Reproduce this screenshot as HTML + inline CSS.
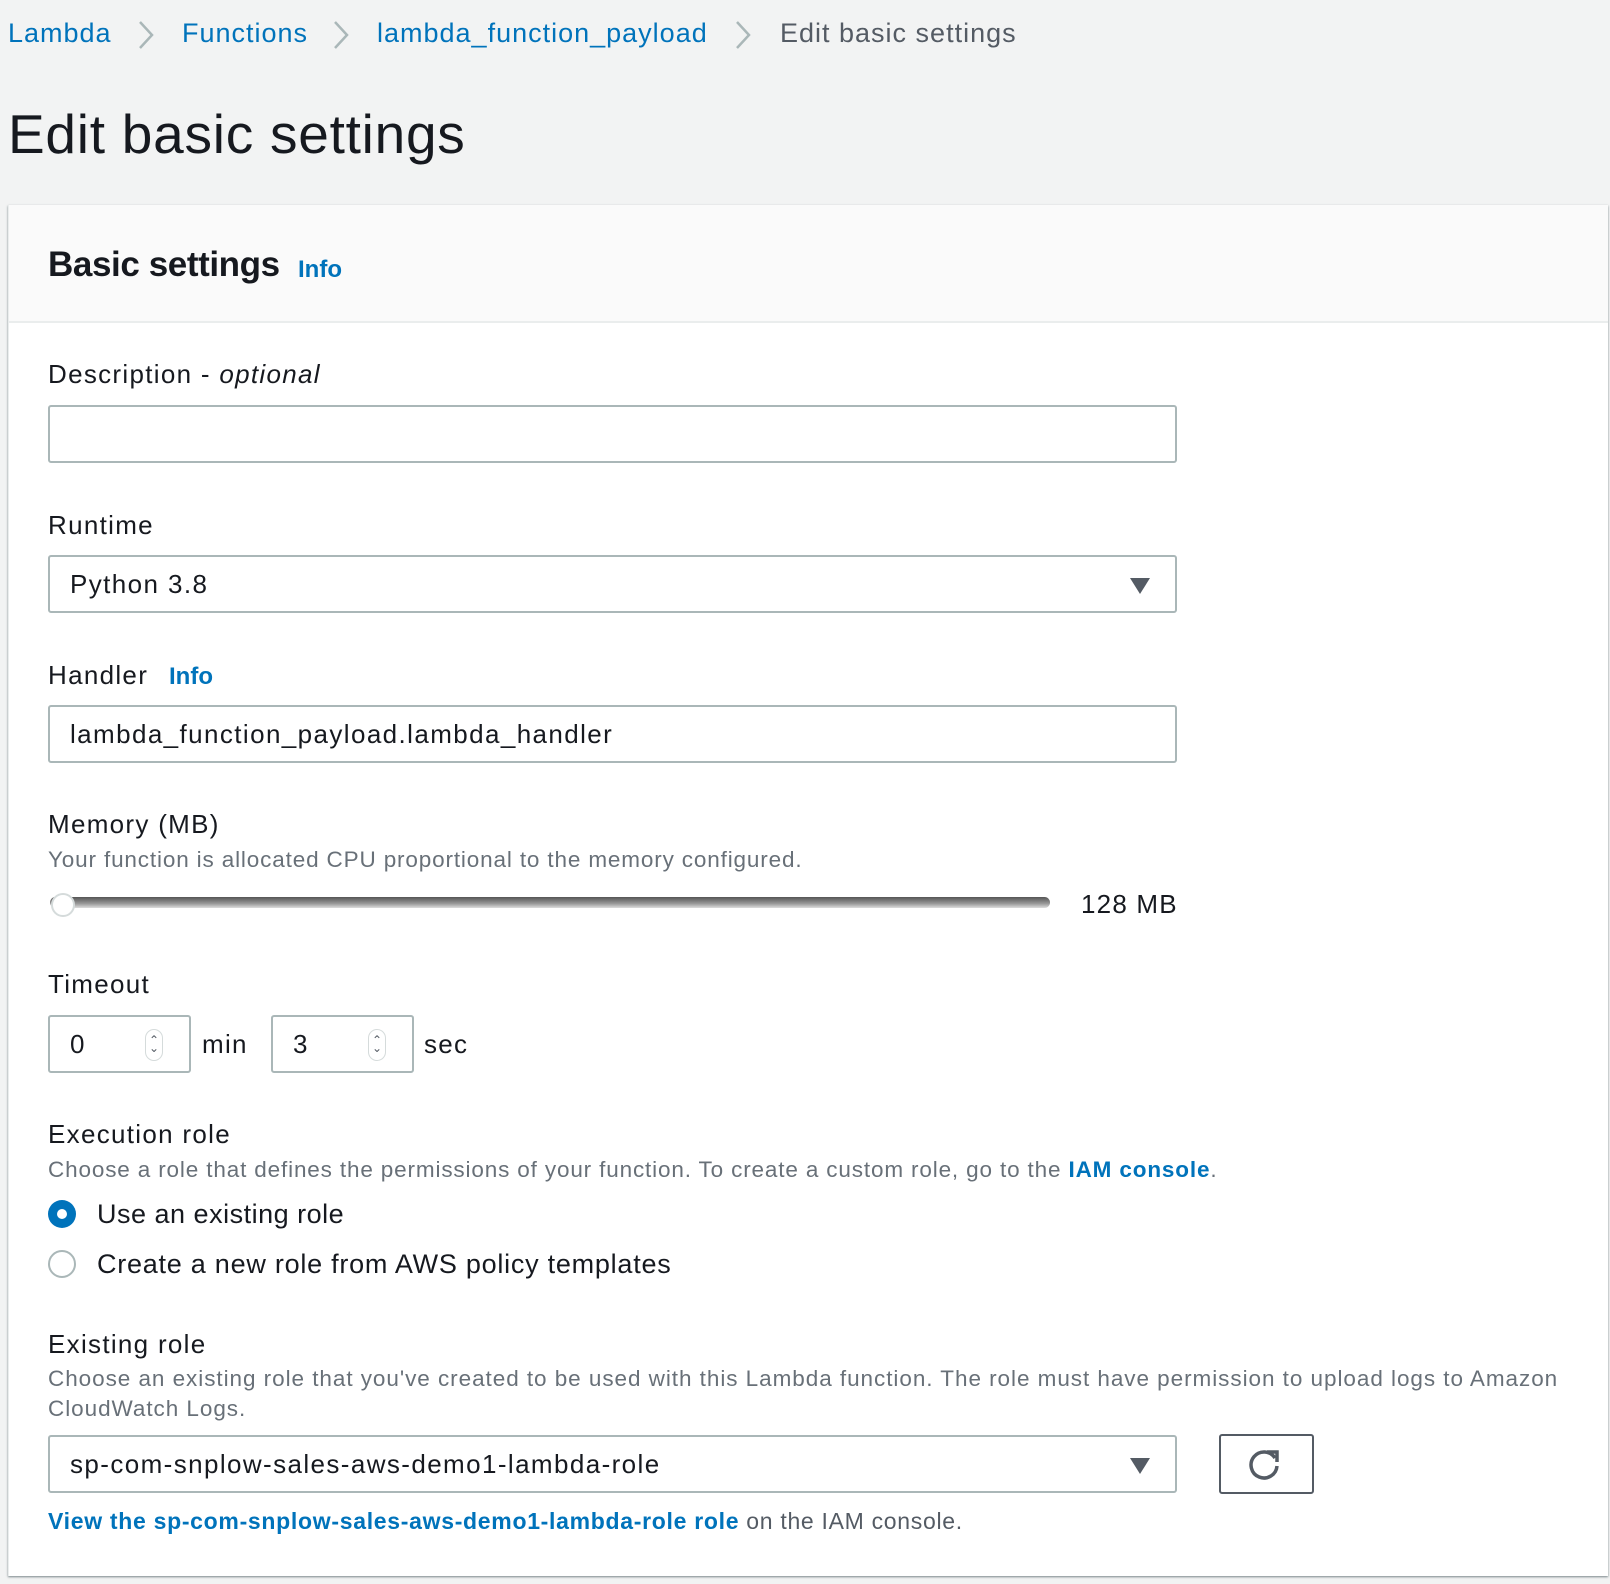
<!DOCTYPE html>
<html><head><meta charset="utf-8"><style>
*{box-sizing:border-box;margin:0;padding:0}
body{width:1610px;height:1584px;background:#f2f3f3;font-family:"Liberation Sans",sans-serif;color:#16191f;position:relative;overflow:hidden}
.a{position:absolute;white-space:nowrap}
.bc{font-size:27px;top:18px;color:#0073bb;letter-spacing:1px}
.sep{position:absolute;top:20px}
.lbl{font-size:26px;left:48px;letter-spacing:1.3px}
.desc{font-size:22.5px;color:#687078;left:48px;letter-spacing:0.85px}
.inp{position:absolute;left:48px;width:1129px;height:58px;border:2px solid #aab7b8;border-radius:3px;background:#fff;font-size:26px;padding-left:20px;line-height:54px;letter-spacing:1.4px}
.tri{position:absolute;right:25px;top:21px;width:0;height:0;border-left:10px solid transparent;border-right:10px solid transparent;border-top:16px solid #545b64}
.link{color:#0073bb;font-weight:bold}
.spin{position:absolute;left:95px;top:12px;width:18px;height:32px;border:1px solid #d5dbdb;border-radius:9px}
</style></head><body>
<div class="a bc" style="left:8px">Lambda</div>
<svg class="sep" style="left:138px" width="16" height="30" viewBox="0 0 16 30"><path d="M2 2 L14 15 L2 28" fill="none" stroke="#aab7b8" stroke-width="2.5"/></svg>
<div class="a bc" style="left:182px">Functions</div>
<svg class="sep" style="left:333px" width="16" height="30" viewBox="0 0 16 30"><path d="M2 2 L14 15 L2 28" fill="none" stroke="#aab7b8" stroke-width="2.5"/></svg>
<div class="a bc" style="left:377px">lambda_function_payload</div>
<svg class="sep" style="left:735px" width="16" height="30" viewBox="0 0 16 30"><path d="M2 2 L14 15 L2 28" fill="none" stroke="#aab7b8" stroke-width="2.5"/></svg>
<div class="a bc" style="left:780px;color:#545b64">Edit basic settings</div>
<div class="a" style="left:8px;top:102px;font-size:55px;letter-spacing:0.75px">Edit basic settings</div>

<div style="position:absolute;left:8px;top:205px;width:1600px;height:1371px;background:#fff;box-shadow:0 1px 2px rgba(0,28,36,.5);border-left:1px solid #eaeded">
<div style="height:118px;background:#fafafa;border-bottom:2px solid #eaeded"></div>
</div>
<div class="a" style="left:48px;top:245px;font-size:35px;font-weight:bold;letter-spacing:-0.4px">Basic settings</div>
<div class="a link" style="left:298px;top:256px;font-size:24px">Info</div>

<div class="a lbl" style="top:359px">Description - <i>optional</i></div>
<div class="inp" style="top:405px"></div>

<div class="a lbl" style="top:510px">Runtime</div>
<div class="inp" style="top:555px">Python 3.8<div class="tri"></div></div>

<div class="a lbl" style="top:660px">Handler</div>
<div class="a link" style="left:169px;top:663px;font-size:24px">Info</div>
<div class="inp" style="top:705px">lambda_function_payload.lambda_handler</div>

<div class="a lbl" style="top:809px">Memory (MB)</div>
<div class="a desc" style="top:847px">Your function is allocated CPU proportional to the memory configured.</div>
<div style="position:absolute;left:50px;top:897px;width:1000px;height:11px;border-radius:6px;background:linear-gradient(#555,#999 60%,#ddd)"></div>
<div style="position:absolute;left:51px;top:893px;width:24px;height:24px;border-radius:50%;background:#fff;border:2px solid #d5dbdb"></div>
<div class="a" style="left:1081px;top:889px;font-size:26px;letter-spacing:1.2px">128 MB</div>

<div class="a lbl" style="top:969px">Timeout</div>
<div class="inp" style="top:1015px;width:143px">0<div class="spin"><span class="a" style="left:3px;top:-17px;font-size:12px;color:#545b64">⌃</span><span class="a" style="left:3px;top:-9px;font-size:12px;color:#545b64">⌄</span></div></div>
<div class="a" style="left:202px;top:1029px;font-size:26px;letter-spacing:1.3px">min</div>
<div class="inp" style="top:1015px;left:271px;width:143px">3<div class="spin"><span class="a" style="left:3px;top:-17px;font-size:12px;color:#545b64">⌃</span><span class="a" style="left:3px;top:-9px;font-size:12px;color:#545b64">⌄</span></div></div>
<div class="a" style="left:424px;top:1029px;font-size:26px;letter-spacing:1.3px">sec</div>

<div class="a lbl" style="top:1119px">Execution role</div>
<div class="a desc" style="top:1157px">Choose a role that defines the permissions of your function. To create a custom role, go to the <span class="link">IAM console</span>.</div>
<div style="position:absolute;left:48px;top:1200px;width:28px;height:28px;border-radius:50%;background:#0073bb;display:flex;align-items:center;justify-content:center"><div style="width:10px;height:10px;border-radius:50%;background:#fff"></div></div>
<div class="a" style="left:97px;top:1199px;font-size:27px;letter-spacing:0.5px">Use an existing role</div>
<div style="position:absolute;left:48px;top:1250px;width:28px;height:28px;border-radius:50%;border:2px solid #aab7b8"></div>
<div class="a" style="left:97px;top:1249px;font-size:27px;letter-spacing:0.75px">Create a new role from AWS policy templates</div>

<div class="a lbl" style="top:1329px">Existing role</div>
<div class="a desc" style="top:1366px;letter-spacing:0.95px">Choose an existing role that you've created to be used with this Lambda function. The role must have permission to upload logs to Amazon</div>
<div class="a desc" style="top:1396px;letter-spacing:0.95px">CloudWatch Logs.</div>
<div class="inp" style="top:1435px">sp-com-snplow-sales-aws-demo1-lambda-role<div class="tri"></div></div>
<div style="position:absolute;left:1219px;top:1434px;width:95px;height:60px;border:2px solid #545b64;border-radius:3px;background:#fff">
<svg width="91" height="56" viewBox="0 0 91 56"><path d="M54 22 A13 13 0 1 0 56 30" fill="none" stroke="#545b64" stroke-width="3.5"/><path d="M46 16 H56 V26" fill="none" stroke="#545b64" stroke-width="3.5"/></svg></div>
<div class="a desc" style="top:1508px;color:#545b64;font-size:23px;letter-spacing:0.7px"><span class="link">View the sp-com-snplow-sales-aws-demo1-lambda-role role</span> on the IAM console.</div>
</body></html>
